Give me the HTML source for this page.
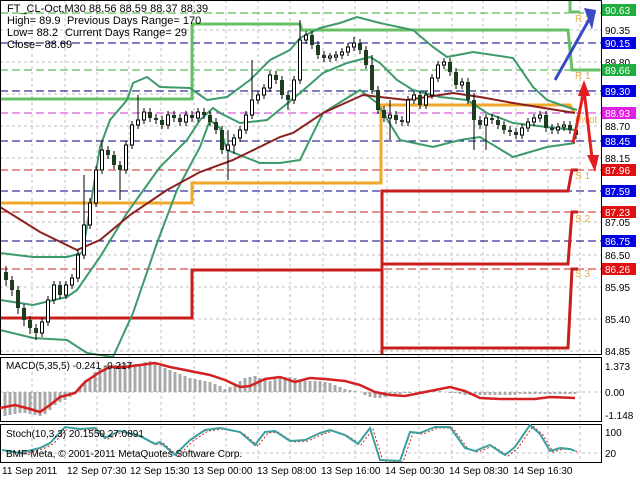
<!DOCTYPE html>
<html><head><meta charset="utf-8"><style>
html,body{margin:0;padding:0;background:#fff;}
svg{display:block;font-family:"Liberation Sans",sans-serif;}
</style></head><body>
<svg width="640" height="480" viewBox="0 0 640 480" xmlns="http://www.w3.org/2000/svg">
<rect width="640" height="480" fill="#fff"/>
<g stroke="#c0c0c0" stroke-dasharray="3,3" stroke-width="1">
<path d="M32 0V462M65 0V462M97 0V462M129 0V462M161 0V462M194 0V462M226 0V462M258 0V462M290 0V462M323 0V462M355 0V462M387 0V462M419 0V462M452 0V462M483 0V462M516 0V462M548 0V462M580 0V462"/>
<path d="M0 30H601M0 62H601M0 94H601M0 126H601M0 158H601M0 222H601M0 255H601M0 287H601M0 319H601M0 351H601"/>
<path d="M0 392H601M0 453H601"/>
</g>
<g stroke-width="1" stroke-dasharray="8,4">
<path d="M0 13H601" stroke="#33aa33"/>
<path d="M0 43H601" stroke="#000080"/>
<path d="M0 70H601" stroke="#33aa33"/>
<path d="M0 91H601" stroke="#000080"/>
<path d="M0 113H601" stroke="#cc33cc"/>
<path d="M0 141H601" stroke="#000080"/>
<path d="M0 170H601" stroke="#cc2222"/>
<path d="M0 191H601" stroke="#000080"/>
<path d="M0 212H601" stroke="#cc2222"/>
<path d="M0 241H601" stroke="#000080"/>
<path d="M0 269H601" stroke="#cc2222"/>
</g>
<g fill="none" stroke-width="3">
<path d="M0 99H192V24H300L302 30H568L572 70H600" stroke="#66c066"/>
<path d="M570 0V12H580" stroke="#66c066"/>
<path d="M0 203H192V183H381V105H570L574 113" stroke="#f0a828"/>
<path d="M0 318H192V270H381" stroke="#c81e1e"/>
<path d="M382 355V191H568L572 170H578" stroke="#c81e1e"/>
<path d="M383 264H568L572 212H578" stroke="#c81e1e"/>
<path d="M383 348H568L572 269H578" stroke="#c81e1e"/>
</g>
<g font-size="10" fill="#e0b050">
<text x="575" y="22">R 2</text><text x="575" y="79">R 1</text><text x="575" y="123">Pivot</text>
<text x="575" y="179">S 1</text><text x="575" y="222">S 2</text><text x="575" y="277">S 3</text>
</g>
<g fill="none" stroke="#3d9a6a" stroke-width="2">
<path d="M0 253L33 257L67 257L82 253L87 227L100 147L110 120L127 100L133 83L147 77L160 87L190 88L207 100L227 97L250 80L270 60L290 50L300 38L320 28L340 23L357 17L380 23L413 30L433 47L447 57L473 52L513 58L533 87L547 100L567 107L577 110"/>
<path d="M0 300L33 305L67 297L77 290L100 257L127 213L160 167L187 140L200 120L213 108L220 113L240 123L267 120L300 93L323 73L347 63L370 57L380 63L397 80L413 90L440 97L467 100L487 113L513 123L547 127L575 130"/>
<path d="M0 330L33 338L67 340L87 353L113 357L133 313L157 243L177 190L200 147L210 120L220 128L227 150L260 163L280 163L300 160L323 113L360 90L377 103L400 140L433 147L460 140L480 137L513 157L547 147L575 143"/>
</g>
<path d="M0 207L40 232L77 250L100 240L130 215L167 190L200 172L233 160L280 137L293 133L323 113L363 95L380 97L407 100L453 93L480 97L513 103L575 113" fill="none" stroke="#8b2020" stroke-width="2"/>
<!-- wicks -->
<path stroke="#000" stroke-width="1" fill="none" d="M6 266V286M12 276V296M18 286V314M24 304V326M30 316V334M36 324V340M42 318V337M48 296V326M54 281V304M60 281V299M66 281V299M72 274V289M78 250V282M84 175V259M90 198V229M96 166V207M102 140V174M108 146V159M114 151V169M120 161V200M126 141V174M132 121V149M138 95V129M144 108V124M150 108V122M156 114V124M162 116V129M168 111V129M174 111V122M180 114V126M186 111V126M192 111V122M198 108V122M204 108V119M210 111V126M216 118V134M222 126V154M228 130V180M234 134V154M240 126V142M246 111V134M252 60V119M258 91V104M264 84V99M270 71V92M276 71V84M282 76V99M288 91V110M294 76V104M300 20V84M306 31V44M312 31V49M318 41V59M324 51V62M330 53V62M336 51V61M342 48V59M348 43V56M354 37V51M360 39V54M366 46V69M372 55V94M378 86V114M384 106V122M390 100V140M396 111V124M402 116V126M408 96V126M414 91V104M420 91V109M426 91V109M432 74V99M438 61V82M444 58V69M450 58V76M456 68V89M462 78V89M468 78V104M474 93V150M480 116V129M486 114V150M492 114V124M498 116V129M504 121V134M510 126V136M516 128V139M522 124V139M528 118V132M534 114V126M540 111V122M546 111V132M552 124V134M558 123V134M564 121V131M570 121V134M576 126V139"/>
<!-- dark bodies -->
<path stroke="#1e3d1e" stroke-width="4" fill="none" d="M6 272V280M12 280V290M18 290V308M24 308V320M30 320V328M36 328V333M60 285V295M108 150V155M114 155V165M120 165V170M150 112V118M156 118V120M162 120V125M174 115V118M180 118V122M192 115V118M204 112V115M210 115V122M216 122V130M222 130V150M276 75V80M282 80V95M288 95V100M312 35V45M318 45V55M324 55V58M360 43V50M366 50V65M372 65V90M378 90V110M384 110V118M396 115V120M402 120V122M420 95V105M450 62V72M456 72V85M468 82V100M474 100V120M480 120V125M492 118V120M498 120V125M504 125V130M510 130V132M516 132V135M546 115V128M552 128V130M570 125V130M576 130V135"/>
<!-- white bodies -->
<g fill="#fff" stroke="#000" stroke-width="1">
<rect x="40.5" y="322" width="3" height="11"/><rect x="46.5" y="300" width="3" height="22"/><rect x="52.5" y="285" width="3" height="15"/><rect x="64.5" y="285" width="3" height="10"/><rect x="70.5" y="278" width="3" height="7"/><rect x="76.5" y="255" width="3" height="23"/><rect x="82.5" y="225" width="3" height="30"/><rect x="88.5" y="203" width="3" height="22"/><rect x="94.5" y="170" width="3" height="33"/><rect x="100.5" y="150" width="3" height="20"/><rect x="124.5" y="145" width="3" height="25"/><rect x="130.5" y="125" width="3" height="20"/><rect x="136.5" y="120" width="3" height="5"/><rect x="142.5" y="112" width="3" height="8"/><rect x="166.5" y="115" width="3" height="10"/><rect x="184.5" y="115" width="3" height="7"/><rect x="196.5" y="112" width="3" height="6"/><rect x="226.5" y="145" width="3" height="5"/><rect x="232.5" y="138" width="3" height="7"/><rect x="238.5" y="130" width="3" height="8"/><rect x="244.5" y="115" width="3" height="15"/><rect x="250.5" y="100" width="3" height="15"/><rect x="256.5" y="95" width="3" height="5"/><rect x="262.5" y="88" width="3" height="7"/><rect x="268.5" y="75" width="3" height="13"/><rect x="292.5" y="80" width="3" height="20"/><rect x="298.5" y="40" width="3" height="40"/><rect x="304.5" y="35" width="3" height="5"/><rect x="328.5" y="56" width="3" height="2"/><rect x="334.5" y="55" width="3" height="2"/><rect x="340.5" y="52" width="3" height="3"/><rect x="346.5" y="47" width="3" height="5"/><rect x="352.5" y="43" width="3" height="4"/><rect x="388.5" y="115" width="3" height="3"/><rect x="406.5" y="100" width="3" height="22"/><rect x="412.5" y="95" width="3" height="5"/><rect x="424.5" y="95" width="3" height="10"/><rect x="430.5" y="78" width="3" height="17"/><rect x="436.5" y="65" width="3" height="13"/><rect x="442.5" y="62" width="3" height="3"/><rect x="460.5" y="82" width="3" height="3"/><rect x="484.5" y="118" width="3" height="7"/><rect x="520.5" y="128" width="3" height="7"/><rect x="526.5" y="122" width="3" height="6"/><rect x="532.5" y="118" width="3" height="4"/><rect x="538.5" y="115" width="3" height="3"/><rect x="556.5" y="127" width="3" height="3"/><rect x="562.5" y="125" width="3" height="2"/>
</g>
<path d="M555 80L590 18" stroke="#3a4bc8" stroke-width="3"/><path d="M584 8L596 10L592 30Z" fill="#3a4bc8"/>
<path d="M573 143L584 90L592 158" stroke="#e02020" stroke-width="3" fill="none"/><path d="M584 80L578 96L590 96Z" fill="#e02020"/><path d="M595 172L587 155L599 155Z" fill="#e02020"/>
<g font-size="11" fill="#000">
<text x="7" y="12">FT_CL-Oct,M30  88.56 88.59 88.37 88.39</text>
<text x="7" y="24">High= 89.9</text><text x="67" y="24">Previous Days Range= 170</text>
<text x="7" y="36">Low= 88.2</text><text x="65" y="36">Current Days Range= 29</text>
<text x="7" y="48">Close= 88.69</text>
</g>
<g stroke="#000" stroke-width="1" fill="none">
<rect x="0.5" y="0.5" width="601" height="354"/>
<rect x="0.5" y="357.5" width="601" height="64"/>
<rect x="0.5" y="424.5" width="601" height="38"/>
</g>
<path d="M5 392V416M10 392V415M15 392V414M20 392V413M25 392V413M30 392V414M35 392V415M40 392V416M45 392V414M50 392V410M55 392V405M60 392V402M65 392V400M70 392V397M75 392V394M80 392V388M85 392V383M90 392V378M95 392V372M100 392V368M105 392V366M110 392V365M115 392V365M120 392V364M125 392V363M130 392V363M135 392V364M140 392V364M145 392V362M150 392V361M155 392V363M160 392V366M165 392V368M170 392V370M175 392V372M180 392V374M185 392V376M190 392V378M195 392V379M200 392V380M205 392V381M210 392V382M215 392V384M220 392V386M225 392V389M230 392V387M235 392V384M240 392V381M245 392V378M250 392V377M255 392V376M260 392V378M265 392V380M270 392V381M275 392V379M280 392V378M285 392V377M290 392V377M295 392V378M300 392V380M305 392V381M310 392V381M315 392V381M320 392V381M325 392V382M330 392V383M335 392V385M340 392V387M345 392V389M350 392V390M355 392V391M360 392V392M365 392V395M370 392V397M375 392V398M380 392V398M385 392V397M390 392V396M395 392V395M400 392V394M405 392V393M410 392V393M415 392V392M420 392V391M425 392V391M430 392V391M435 392V391M440 392V391M445 392V392M450 392V393M455 392V393M460 392V394M465 392V395M470 392V395M475 392V395M480 392V395M485 392V395M490 392V395M495 392V395M500 392V395M505 392V395M510 392V395M515 392V395M520 392V394M525 392V394M530 392V394M535 392V394M540 392V394M545 392V394M550 392V394M555 392V394M560 392V394M565 392V394M570 392V394M575 392V394" stroke="#a8a8a8" stroke-width="3"/>
<path d="M0 408L15 405L30 409L40 412L50 405L60 397L75 393L85 382L100 372L110 367L125 367L140 365L155 363L170 367L190 371L210 375L225 380L240 387L250 386L265 379L280 377L295 382L310 378L325 379L345 381L360 385L375 392L390 395L405 396L420 393L435 390L450 387L465 391L480 398L500 399L520 399L535 399L550 397L575 398" fill="none" stroke="#d42020" stroke-width="2.5"/>
<path d="M2 450L20 453L40 448L50 443L65 427L80 429L95 428L105 438L120 431L140 436L155 444L160 442L175 455L190 440L205 430L220 428L240 432L255 445L265 432L275 431L290 441L305 440L320 433L330 430L345 435L358 444L370 428L380 460L400 461L410 432L420 433L435 427L450 427L465 448L475 451L490 445L505 455L515 447L530 425L540 434L550 451L560 448L570 449L575 451" fill="none" stroke="#d02020" stroke-width="1" stroke-dasharray="2,2" transform="translate(3,1)"/>
<path d="M2 450L20 453L40 448L50 443L65 427L80 429L95 428L105 438L120 431L140 436L155 444L160 442L175 455L190 440L205 430L220 428L240 432L255 445L265 432L275 431L290 441L305 440L320 433L330 430L345 435L358 444L370 428L380 460L400 461L410 432L420 433L435 427L450 427L465 448L475 451L490 445L505 455L515 447L530 425L540 434L550 451L560 448L570 449L575 451" fill="none" stroke="#3aa0a0" stroke-width="2"/>
<g font-size="10" fill="#000">
<text x="6" y="369">MACD(5,35,5) -0.241 -0.217</text>
<text x="6" y="437">Stoch(10,3,3) 20.1550 27.0891</text>
<text x="6" y="457">BMF-Meta, © 2001-2011 MetaQuotes Software Corp.</text>
</g>
<g font-size="10" fill="#000">
<text x="2" y="474">11 Sep 2011</text><text x="67" y="474">12 Sep 07:30</text><text x="130" y="474">12 Sep 15:30</text>
<text x="193" y="474">13 Sep 00:00</text><text x="257" y="474">13 Sep 08:00</text><text x="321" y="474">13 Sep 16:00</text>
<text x="385" y="474">14 Sep 00:30</text><text x="449" y="474">14 Sep 08:30</text><text x="513" y="474">14 Sep 16:30</text>
</g>
<g font-size="10">
<rect x="602" y="4" width="34" height="12" fill="#1fae3f"/><text x="605" y="14" fill="#fff">90.63</text>
<text x="605" y="34" fill="#000">90.35</text>
<rect x="602" y="37" width="34" height="12" fill="#0000e0"/><text x="605" y="47" fill="#fff">90.15</text>
<text x="605" y="66" fill="#000">89.80</text>
<rect x="602" y="64" width="34" height="12" fill="#1fae3f"/><text x="605" y="74" fill="#fff">89.66</text>
<rect x="602" y="85" width="34" height="12" fill="#0000e0"/><text x="605" y="95" fill="#fff">89.30</text>
<rect x="602" y="107" width="34" height="12" fill="#e020e0"/><text x="605" y="117" fill="#fff">88.93</text>
<text x="605" y="130" fill="#000">88.70</text>
<rect x="602" y="135" width="34" height="12" fill="#0000e0"/><text x="605" y="145" fill="#fff">88.45</text>
<text x="605" y="162" fill="#000">88.15</text>
<rect x="602" y="164" width="34" height="12" fill="#e01010"/><text x="605" y="174" fill="#fff">87.96</text>
<rect x="602" y="185" width="34" height="12" fill="#0000e0"/><text x="605" y="195" fill="#fff">87.59</text>
<rect x="602" y="206" width="34" height="12" fill="#e01010"/><text x="605" y="216" fill="#fff">87.23</text>
<text x="605" y="226" fill="#000">87.05</text>
<rect x="602" y="235" width="34" height="12" fill="#0000e0"/><text x="605" y="245" fill="#fff">86.75</text>
<text x="605" y="259" fill="#000">86.50</text>
<rect x="602" y="263" width="34" height="12" fill="#e01010"/><text x="605" y="273" fill="#fff">86.26</text>
<text x="605" y="291" fill="#000">85.95</text>
<text x="605" y="323" fill="#000">85.40</text>
<text x="605" y="355" fill="#000">84.85</text>
<text x="605" y="370" fill="#000">1.373</text>
<text x="605" y="396" fill="#000">0.00</text>
<text x="605" y="419" fill="#000">-1.148</text>
<text x="605" y="436" fill="#000">100</text>
<text x="605" y="457" fill="#000">20</text>
</g>
</svg>
</body></html>
